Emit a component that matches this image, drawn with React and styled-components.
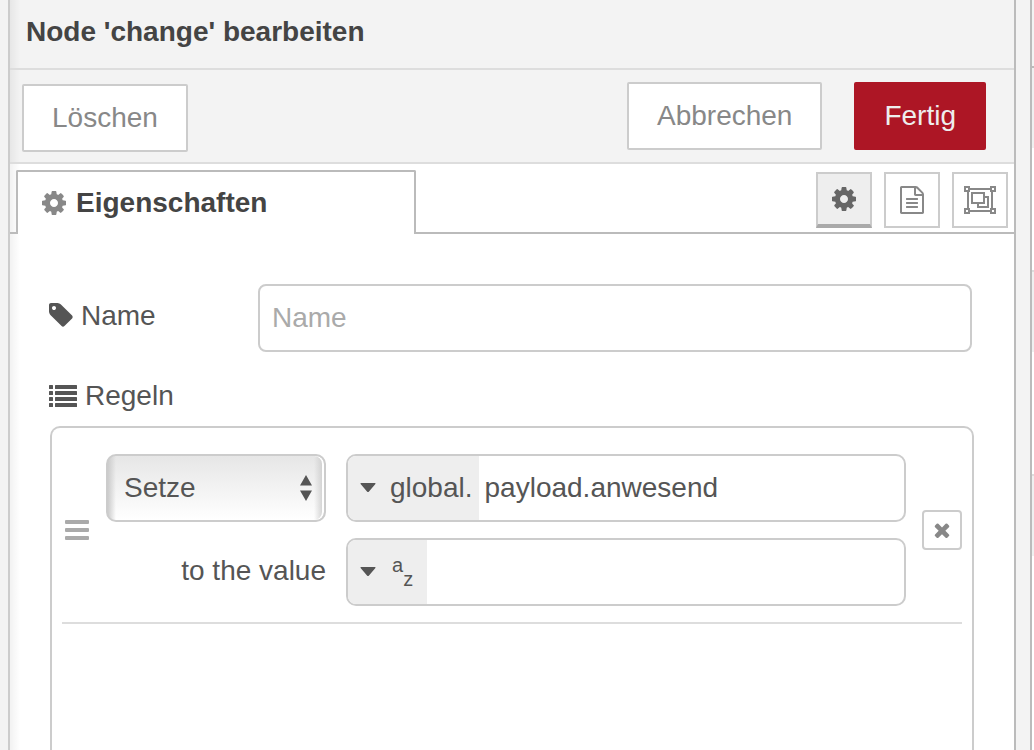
import { useState } from 'react';
import styled, { createGlobalStyle } from 'styled-components';

const GlobalStyle = createGlobalStyle`
  * {
    box-sizing: border-box;
  }
  body {
    margin: 0;
    background: #f3f3f3;
    overflow: hidden;
  }
  body, button, input, select {
    font-family: "Liberation Sans", Arial, Helvetica, sans-serif;
    font-size: 28px;
    line-height: 32px;
    color: #555;
  }
`;

const Workspace = styled.div`
  display: flex;
  height: 100vh;
  overflow: hidden;
`;

const Gutter = styled.div`
  flex: 0 0 ${props => props.$width};
  background: #f3f3f3;
`;

const Tray = styled.main`
  flex: 1;
  min-width: 0;
  display: flex;
  flex-direction: column;
  background: linear-gradient(to right, rgba(0, 0, 0, 0.05), transparent 10px), #fff;
  border-left: 2px solid #ccc;
  border-right: 2px solid #bbb;
`;

const TrayHeader = styled.header`
  background: linear-gradient(to right, rgba(0, 0, 0, 0.05), transparent 10px), #f3f3f3;
  border-bottom: 2px solid #ddd;
  padding: 16px 16px 20px;
  h1 {
    margin: 0;
    font-size: 28px;
    line-height: 32px;
    color: #444;
  }
`;

const TrayToolbar = styled.div`
  display: flex;
  align-items: flex-start;
  gap: 32px;
  padding: 12px 28px 10px 12px;
  background: linear-gradient(to right, rgba(0, 0, 0, 0.05), transparent 10px), #f3f3f3;
  border-bottom: 2px solid #ddd;
`;

const ToolbarSide = styled.div`
  margin-right: auto;
  padding-top: 2px;
`;

const Button = styled.button`
  display: block;
  height: 68px;
  padding: 0 28px;
  border: 2px solid ${props => (props.$primary ? '#ad1625' : '#ccc')};
  border-radius: 2px;
  background: ${props => (props.$primary ? '#ad1625' : '#fff')};
  color: ${props => (props.$primary ? '#eee' : '#888')};
  cursor: pointer;
`;

const TabBar = styled.div`
  display: flex;
  justify-content: space-between;
  align-items: flex-start;
  height: 70px;
  padding: 6px 6px 0;
  border-bottom: 2px solid #bbb;
`;

const Tab = styled.button`
  flex: 0 1 400px;
  height: 64px;
  display: flex;
  align-items: center;
  gap: 8px;
  padding: 0 22px;
  border: 2px solid #bbb;
  border-bottom: 0;
  border-radius: 2px 2px 0 0;
  background: #fff;
  color: #444;
  font-weight: bold;
  svg {
    color: #888;
  }
`;

const TabActions = styled.div`
  display: flex;
  gap: 12px;
  padding-top: 2px;
`;

const IconButton = styled.button`
  width: 56px;
  height: 56px;
  display: flex;
  align-items: center;
  justify-content: center;
  padding: 0;
  background: ${props => (props.$selected ? '#eee' : '#fff')};
  color: ${props => (props.$selected ? '#666' : '#888')};
  border: 2px solid #ccc;
  border-bottom: ${props => (props.$selected ? '4px solid #aaa' : '2px solid #ccc')};
`;

const Form = styled.form`
  flex: 1;
  display: flex;
  flex-direction: column;
  padding: 50px 40px 0 38px;
`;

const FormRow = styled.div`
  display: flex;
  align-items: center;
  padding-right: 2px;
`;

const Label = styled.label`
  display: flex;
  align-items: center;
  gap: 8px;
  width: 210px;
  padding-bottom: 4px;
`;

const TextInput = styled.input`
  flex: 1;
  min-width: 0;
  height: 68px;
  padding: 0 12px;
  border: 2px solid #ccc;
  border-radius: 8px;
  background: #fff;
  &::placeholder {
    color: #aaa;
    opacity: 1;
  }
`;

const RulesTitle = styled.h2`
  display: flex;
  align-items: center;
  gap: 8px;
  margin: 28px 0 14px;
  font-size: 28px;
  line-height: 32px;
  font-weight: normal;
`;

const RuleList = styled.ol`
  flex: 1;
  margin: 0 0 0 2px;
  padding: 0 10px;
  list-style: none;
  border: 2px solid #ccc;
  border-bottom: 0;
  border-radius: 10px 10px 0 0;
`;

const Rule = styled.li`
  display: flex;
  align-items: center;
  gap: 16px;
  padding: 26px 0 16px;
  border-bottom: 2px solid #ddd;
`;

const Handle = styled.span`
  flex: 0 0 28px;
  display: flex;
  justify-content: center;
  padding-left: 2px;
  color: #aaa;
  cursor: move;
`;

const RuleFields = styled.div`
  flex: 1;
  min-width: 0;
  display: grid;
  grid-template-columns: 220px minmax(0, 1fr);
  gap: 16px 20px;
  align-items: center;
`;

const SelectBox = styled.div`
  display: grid;
  align-items: center;
  select {
    grid-area: 1 / 1;
    width: 100%;
    height: 68px;
    padding: 0 16px;
    appearance: none;
    border: 2px solid #ccc;
    border-radius: 10px;
    background: linear-gradient(to right, #ccc, transparent 8px),
      linear-gradient(to left, #ccc, transparent 10px),
      linear-gradient(#e6e6e6, #fff);
    box-shadow: inset -2px 0 0 #fff;
  }
  svg {
    grid-area: 1 / 1;
    justify-self: end;
    margin-right: 14px;
    pointer-events: none;
  }
`;

const TargetLabel = styled.label`
  padding-bottom: 2px;
  text-align: right;
`;

const TypedInput = styled.div`
  display: flex;
  height: 68px;
  border: 2px solid #ccc;
  border-radius: 10px;
  background: #fff;
  overflow: hidden;
  input {
    flex: 1;
    min-width: 0;
    padding: 0 6px;
    border: 0;
    outline: 0;
    background: transparent;
  }
`;

const TypeButton = styled.button`
  display: flex;
  align-items: center;
  gap: ${props => (props.$wide ? '14px' : '16px')};
  padding: 0 ${props => (props.$wide ? '6px' : '14px')} 0 12px;
  border: 0;
  background: #eee;
`;

const StringType = styled.span`
  display: flex;
  font-size: 20px;
  line-height: 20px;
  span:last-child {
    padding-top: 14px;
  }
`;

const RemoveButton = styled.button`
  width: 40px;
  height: 40px;
  display: flex;
  align-items: center;
  justify-content: center;
  padding: 0;
  border: 2px solid #ccc;
  border-radius: 4px;
  background: #fff;
  color: #888;
`;

const Palette = styled.aside`
  flex: 0 0 4px;
  display: flex;
  flex-direction: column;
  border-left: 2px solid #bbb;
  background: #fff;
`;

const PaletteHeader = styled.div`
  height: 68px;
  background: #f3f3f3;
  border-bottom: 2px solid #bbb;
`;

const PaletteSection = styled.div`
  height: 204px;
  border-bottom: 2px solid #ddd;
  background: linear-gradient(#f0f0f0 80px, #fff 80px);
  &:last-child {
    border-bottom: 0;
  }
`;

function Cog() {
  return (
    <svg width="28" height="28" viewBox="0 0 1792 1792" fill="currentColor" aria-hidden="true">
      <path d="M1152 896q0-106-75-181t-181-75-181 75-75 181 75 181 181 75 181-75 75-181zm512-109v222q0 12-8 23t-20 13l-185 28q-19 54-39 91 35 50 107 138 10 12 10 25t-9 23q-27 37-99 108t-94 71q-12 0-26-9l-138-108q-44 23-91 38-16 136-29 186-7 28-36 28h-222q-14 0-24.5-8.5t-11.5-21.5l-28-184q-49-16-90-37l-141 107q-10 9-25 9-14 0-25-11-126-114-165-168-7-10-7-23 0-12 8-23 15-21 51-66.5t54-70.5q-27-50-41-99l-183-27q-13-2-21-12.5t-8-23.5v-222q0-12 8-23t19-13l186-28q14-46 39-92-40-57-107-138-10-12-10-24 0-10 9-23 26-36 98.5-107.5t94.5-71.5q13 0 26 10l138 107q44-23 91-38 16-136 29-186 7-28 36-28h222q14 0 24.5 8.5t11.5 21.5l28 184q49 16 90 37l142-107q9-9 24-9 13 0 25 10 129 119 165 170 7 8 7 22 0 12-8 23-15 21-51 66.5t-54 70.5q26 50 41 98l183 28q13 2 21 12.5t8 23.5z" />
    </svg>
  );
}

function Tag() {
  return (
    <svg width="25" height="28" viewBox="64 64 1600 1792" fill="currentColor" aria-hidden="true">
      <path d="M576 448q0-53-37.5-90.5t-90.5-37.5-90.5 37.5-37.5 90.5 37.5 90.5 90.5 37.5 90.5-37.5 37.5-90.5zm1067 576q0 53-37 90l-491 492q-39 37-91 37-53 0-90-37l-715-716q-38-37-64.5-101t-26.5-117v-416q0-52 38-90t90-38h416q53 0 117 26.5t102 64.5l715 714q37 39 37 91z" />
    </svg>
  );
}

function ListIcon() {
  return (
    <svg width="29" height="22" viewBox="0 0 29 22" fill="currentColor" aria-hidden="true">
      {[0, 6, 12, 18].map(y => (
        <g key={y}>
          <rect x="1" y={y} width="4" height="4" rx="0.5" />
          <rect x="7" y={y} width="22" height="4" rx="0.5" />
        </g>
      ))}
    </svg>
  );
}

function FileText() {
  return (
    <svg width="28" height="28" viewBox="0 0 1792 1792" fill="currentColor" aria-hidden="true">
      <path d="M1596 380q28 28 48 76t20 88v1152q0 40-28 68t-68 28h-1344q-40 0-68-28t-28-68v-1600q0-40 28-68t68-28h896q40 0 88 20t76 48zm-444-244v376h376q-10-29-22-41l-313-313q-12-12-41-22zm384 1528v-1024h-416q-40 0-68-28t-28-68v-416h-768v1536h1280zm-1024-864q0-14 9-23t23-9h704q14 0 23 9t9 23v64q0 14-9 23t-23 9h-704q-14 0-23-9t-9-23v-64zm736 224q14 0 23 9t9 23v64q0 14-9 23t-23 9h-704q-14 0-23-9t-9-23v-64q0-14 9-23t23-9h704zm0 256q14 0 23 9t9 23v64q0 14-9 23t-23 9h-704q-14 0-23-9t-9-23v-64q0-14 9-23t23-9h704z" />
    </svg>
  );
}

function ObjectGroup() {
  return (
    <svg width="32" height="28" viewBox="0 0 32 28" fill="none" stroke="currentColor" strokeWidth="2" aria-hidden="true">
      <path d="M6 3h20M6 25h20M4 6v16M28 6v16" />
      <path d="M1 1h4v4H1zM27 1h4v4h-4zM1 23h4v4H1zM27 23h4v4h-4z" />
      <path d="M8 7h12v10H8z" />
      <path d="M20 11h4v10H14v-4" />
    </svg>
  );
}

function Times() {
  return (
    <svg width="22" height="22" viewBox="0 0 1792 1792" fill="currentColor" aria-hidden="true">
      <path d="M1490 1322q0 40-28 68l-136 136q-28 28-68 28t-68-28l-294-294-294 294q-28 28-68 28t-68-28l-136-136q-28-28-28-68t28-68l294-294-294-294q-28-28-28-68t28-68l136-136q28-28 68-28t68 28l294 294 294-294q28-28 68-28t68 28l136 136q28 28 28 68t-28 68l-294 294 294 294q28 28 28 68z" />
    </svg>
  );
}

function Bars() {
  return (
    <svg width="24" height="20" viewBox="0 0 24 20" fill="currentColor" aria-hidden="true">
      <rect width="24" height="4" rx="1" />
      <rect y="8" width="24" height="4" rx="1" />
      <rect y="16" width="24" height="4" rx="1" />
    </svg>
  );
}

function Caret() {
  return (
    <svg width="16" height="10" viewBox="0 0 16 10" fill="currentColor" aria-hidden="true">
      <path d="M1 0h14q1 .3.4 1L9 8.500q-1 1-2 0L.6 1Q0 .3 1 0z" />
    </svg>
  );
}

function UpDown() {
  return (
    <svg width="12" height="26" viewBox="0 0 12 26" fill="currentColor" aria-hidden="true">
      <path d="M6 0l6 10.500H0zM6 26l6-10.500H0z" />
    </svg>
  );
}

export default function App() {
  const [name, setName] = useState('');
  const [action, setAction] = useState('set');
  const [property, setProperty] = useState('payload.anwesend');
  const [value, setValue] = useState('');

  return (
    <>
      <GlobalStyle />
      <Workspace>
        <Gutter $width="8px" />
        <Tray>
          <TrayHeader>
            <h1>Node 'change' bearbeiten</h1>
          </TrayHeader>
          <TrayToolbar>
            <ToolbarSide>
              <Button type="button">Löschen</Button>
            </ToolbarSide>
            <Button type="button">Abbrechen</Button>
            <Button type="button" $primary>Fertig</Button>
          </TrayToolbar>
          <TabBar>
            <Tab type="button"><Cog />Eigenschaften</Tab>
            <TabActions>
              <IconButton type="button" aria-label="Eigenschaften" $selected><Cog /></IconButton>
              <IconButton type="button" aria-label="Beschreibung"><FileText /></IconButton>
              <IconButton type="button" aria-label="Darstellung"><ObjectGroup /></IconButton>
            </TabActions>
          </TabBar>
          <Form>
            <FormRow>
              <Label htmlFor="node-name"><Tag />Name</Label>
              <TextInput
                id="node-name"
                placeholder="Name"
                value={name}
                onChange={e => setName(e.target.value)}
              />
            </FormRow>
            <RulesTitle><ListIcon />Regeln</RulesTitle>
            <RuleList>
              <Rule>
                <Handle><Bars /></Handle>
                <RuleFields>
                  <SelectBox>
                    <select aria-label="Regel" value={action} onChange={e => setAction(e.target.value)}>
                      <option value="set">Setze</option>
                    </select>
                    <UpDown />
                  </SelectBox>
                  <TypedInput>
                    <TypeButton type="button" $wide><Caret />global.</TypeButton>
                    <input
                      aria-label="Eigenschaft"
                      value={property}
                      onChange={e => setProperty(e.target.value)}
                    />
                  </TypedInput>
                  <TargetLabel htmlFor="rule-value">to the value</TargetLabel>
                  <TypedInput>
                    <TypeButton type="button">
                      <Caret />
                      <StringType><span>a</span><span>z</span></StringType>
                    </TypeButton>
                    <input id="rule-value" value={value} onChange={e => setValue(e.target.value)} />
                  </TypedInput>
                </RuleFields>
                <RemoveButton type="button" aria-label="Regel entfernen"><Times /></RemoveButton>
              </Rule>
            </RuleList>
          </Form>
        </Tray>
        <Gutter $width="14px" />
        <Palette>
          <PaletteHeader />
          <PaletteSection />
          <PaletteSection />
          <PaletteSection />
        </Palette>
      </Workspace>
    </>
  );
}
